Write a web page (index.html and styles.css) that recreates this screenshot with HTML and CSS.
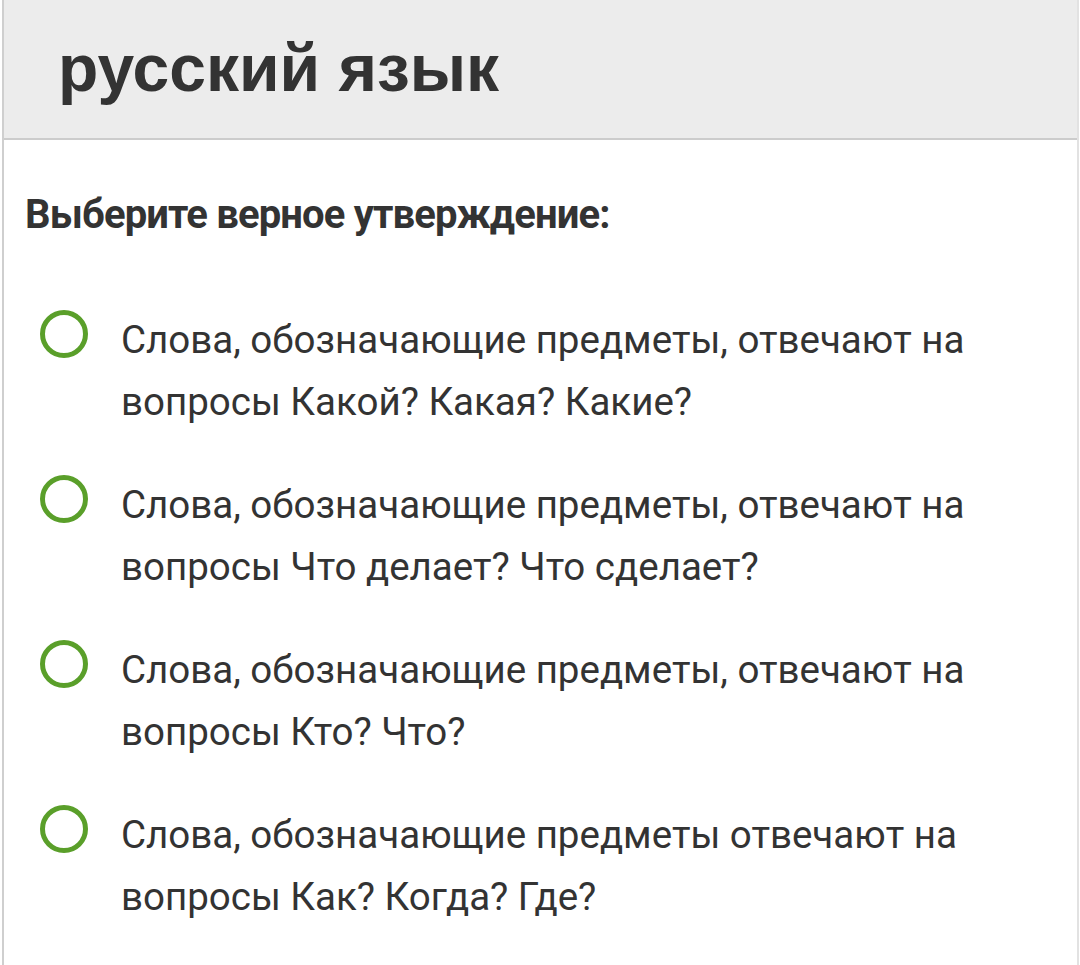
FILE: index.html
```html
<!DOCTYPE html>
<html lang="ru">
<head>
<meta charset="utf-8">
<link rel="stylesheet" href="styles.css">
</head>
<body>
<div class="page">
  <header class="head">
    <h1 class="title">русский язык</h1>
  </header>
  <main class="body">
    <h2 class="question">Выберите верное утверждение:</h2>
    <ul class="options">
      <li class="option"><span class="radio"></span><span class="text">Слова, обозначающие предметы, отвечают на вопросы Какой? Какая? Какие?</span></li>
      <li class="option"><span class="radio"></span><span class="text">Слова, обозначающие предметы, отвечают на вопросы Что делает? Что сделает?</span></li>
      <li class="option"><span class="radio"></span><span class="text">Слова, обозначающие предметы, отвечают на вопросы Кто? Что?</span></li>
      <li class="option"><span class="radio"></span><span class="text">Слова, обозначающие предметы отвечают на вопросы Как? Когда? Где?</span></li>
    </ul>
  </main>
</div>
</body>
</html>
```
FILE: styles.css
```css
html, body {
  margin: 0;
  padding: 0;
  background: #ffffff;
}
.page {
  margin: 0 1px 0 2px;
  border-left: 2px solid #cfcfcf;
  border-right: 2px solid #e2e2e2;
  min-height: 965px;
  box-sizing: border-box;
}
.head {
  background: #ececec;
  height: 140px;
  box-sizing: border-box;
  border-bottom: 2px solid #cccccc;
  padding: 26px 0 0 54px;
}
.title {
  margin: 0;
  font-family: "Liberation Sans", Arial, sans-serif;
  font-weight: bold;
  font-size: 66px;
  line-height: 84px;
  color: #333333;
}
.body {
  padding: 43px 0 0 21px;
}
.question {
  margin: 0;
  font-family: Roboto, "Noto Sans", sans-serif;
  font-weight: bold;
  font-size: 40px;
  line-height: 64px;
  color: #333333;
  letter-spacing: -0.85px;
}
.options {
  list-style: none;
  margin: 0;
  padding: 62px 0 0 0;
}
.option {
  display: flex;
  align-items: flex-start;
  margin-bottom: 41px;
}
.radio {
  flex: none;
  width: 48px;
  height: 48px;
  box-sizing: border-box;
  border: 5px solid #5a9f2a;
  border-radius: 50%;
  margin: 1px 33px 0 15px;
}
.text {
  font-family: Roboto, "Noto Sans", sans-serif;
  font-size: 38.5px;
  line-height: 62px;
  color: #333333;
  max-width: 880px;
}
```
